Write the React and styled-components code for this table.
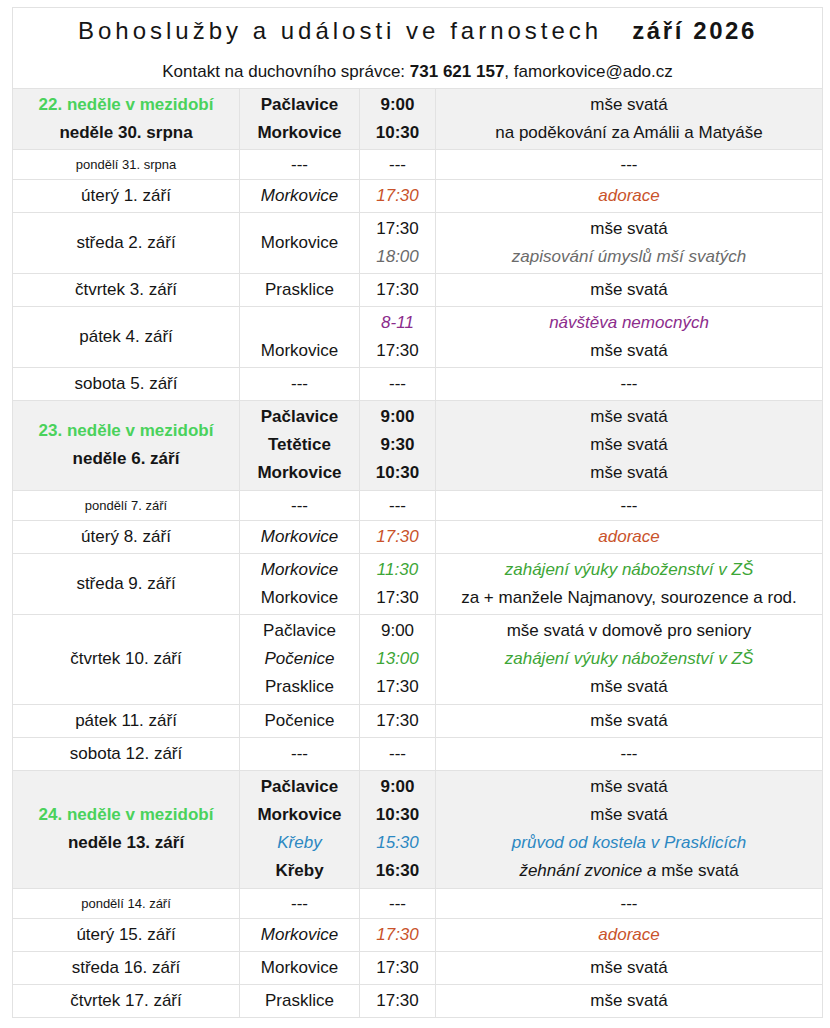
import React from "react";
import styled, { createGlobalStyle } from "styled-components";

const GlobalStyle = createGlobalStyle`
  body {
    margin: 0;
    background: #fff;
    font-family: "Liberation Sans", Arial, sans-serif;
    color: #151515;
  }
`;

const tones = {
  plain: "",
  bold: "font-weight: 700;",
  italic: "font-style: italic;",
  orange: "font-style: italic; color: #c9532b;",
  gray: "font-style: italic; color: #6b6b6b;",
  purple: "font-style: italic; color: #8c2c8c;",
  green: "font-style: italic; color: #3da637;",
  blue: "font-style: italic; color: #2c88c2;",
};

const Page = styled.div`
  padding: 7px 0 12px 12px;
`;

const Table = styled.div`
  width: 811px;
  box-sizing: border-box;
  border: 1px solid #e2e2e2;
`;

const Header = styled.div`
  padding: 10px 0 6px;
  text-align: center;
`;

const Title = styled.div`
  font-size: 24px;
  line-height: 26px;
  letter-spacing: 4px;
  margin-bottom: 18px;
  white-space: nowrap;
`;

const TitleStrong = styled.b`
  letter-spacing: 2.6px;
  margin-left: 30px;
`;

const Contact = styled.div`
  font-size: 17px;
  line-height: 20px;
  white-space: nowrap;
`;

const Group = styled.div`
  display: flex;
  border-top: 1px solid #e2e2e2;
  background: ${(p) => (p.$sunday ? "#f1f1f1" : "#fff")};
  font-size: 17px;
`;

const Col = styled.div`
  width: ${(p) => p.$w}px;
  box-sizing: border-box;
  flex-shrink: 0;
  padding: 2px 0 ${(p) => (p.$tall ? 3 : 2)}px;
  display: flex;
  flex-direction: column;
  justify-content: center;
  border-left: ${(p) => (p.$first ? "none" : "1px solid #e2e2e2")};
`;

const Line = styled.div`
  height: ${(p) => p.$span * p.$h}px;
  display: flex;
  align-items: center;
  justify-content: center;
  white-space: nowrap;
  font-size: ${(p) => (p.$small ? "13px" : "inherit")};
  ${(p) => tones[p.$tone]}
`;

const SundayName = styled(Line)`
  color: #4ad25c;
  font-weight: 700;
`;

const Em = styled.i``;

const L = (t, tone = "plain", span = 1) => ({ t, tone, span });
const dash = { places: [L("---")], times: [L("---")], texts: [L("---")] };
const mass = "mše svatá";
const teach = "zahájení výuky náboženství v ZŠ";

const rows = [
  {
    sunday: "22. neděle v mezidobí",
    day: "neděle 30. srpna",
    places: [L("Pačlavice", "bold"), L("Morkovice", "bold")],
    times: [L("9:00", "bold"), L("10:30", "bold")],
    texts: [L(mass), L("na poděkování za Amálii a Matyáše")],
  },
  { day: "pondělí 31. srpna", small: true, ...dash },
  {
    day: "úterý 1. září",
    places: [L("Morkovice", "italic")],
    times: [L("17:30", "orange")],
    texts: [L("adorace", "orange")],
  },
  {
    day: "středa 2. září",
    places: [L("Morkovice", "plain", 2)],
    times: [L("17:30"), L("18:00", "gray")],
    texts: [L(mass), L("zapisování úmyslů mší svatých", "gray")],
  },
  {
    day: "čtvrtek 3. září",
    places: [L("Prasklice")],
    times: [L("17:30")],
    texts: [L(mass)],
  },
  {
    day: "pátek 4. září",
    places: [L(""), L("Morkovice")],
    times: [L("8-11", "purple"), L("17:30")],
    texts: [L("návštěva nemocných", "purple"), L(mass)],
  },
  { day: "sobota 5. září", ...dash },
  {
    sunday: "23. neděle v mezidobí",
    day: "neděle 6. září",
    places: [L("Pačlavice", "bold"), L("Tetětice", "bold"), L("Morkovice", "bold")],
    times: [L("9:00", "bold"), L("9:30", "bold"), L("10:30", "bold")],
    texts: [L(mass), L(mass), L(mass)],
  },
  { day: "pondělí 7. září", small: true, ...dash },
  {
    day: "úterý 8. září",
    places: [L("Morkovice", "italic")],
    times: [L("17:30", "orange")],
    texts: [L("adorace", "orange")],
  },
  {
    day: "středa 9. září",
    places: [L("Morkovice", "italic"), L("Morkovice")],
    times: [L("11:30", "green"), L("17:30")],
    texts: [L(teach, "green"), L("za + manžele Najmanovy, sourozence a rod.")],
  },
  {
    day: "čtvrtek 10. září",
    places: [L("Pačlavice"), L("Počenice", "italic"), L("Prasklice")],
    times: [L("9:00"), L("13:00", "green"), L("17:30")],
    texts: [L("mše svatá v domově pro seniory"), L(teach, "green"), L(mass)],
  },
  {
    day: "pátek 11. září",
    places: [L("Počenice")],
    times: [L("17:30")],
    texts: [L(mass)],
  },
  { day: "sobota 12. září", ...dash },
  {
    sunday: "24. neděle v mezidobí",
    day: "neděle 13. září",
    places: [
      L("Pačlavice", "bold"),
      L("Morkovice", "bold"),
      L("Křeby", "blue"),
      L("Křeby", "bold"),
    ],
    times: [L("9:00", "bold"), L("10:30", "bold"), L("15:30", "blue"), L("16:30", "bold")],
    texts: [
      L(mass),
      L(mass),
      L("průvod od kostela v Prasklicích", "blue"),
      L(
        <>
          <Em>žehnání zvonice a</Em>&nbsp;mše svatá
        </>
      ),
    ],
  },
  { day: "pondělí 14. září", small: true, ...dash },
  {
    day: "úterý 15. září",
    places: [L("Morkovice", "italic")],
    times: [L("17:30", "orange")],
    texts: [L("adorace", "orange")],
  },
  {
    day: "středa 16. září",
    places: [L("Morkovice")],
    times: [L("17:30")],
    texts: [L(mass)],
  },
  {
    day: "čtvrtek 17. září",
    places: [L("Prasklice")],
    times: [L("17:30")],
    texts: [L(mass)],
  },
];

const Cells = ({ items, h }) =>
  items.map((it, i) => (
    <Line key={i} $span={it.span} $h={h} $tone={it.tone}>
      {it.t}
    </Line>
  ));

const Row = ({ row }) => {
  const h = row.small ? 25 : 28;
  const tall = row.times.length > 2;
  return (
    <Group $sunday={!!row.sunday}>
      <Col $w={226} $first $tall={tall}>
        {row.sunday && (
          <SundayName $span={1} $h={28} $tone="plain">
            {row.sunday}
          </SundayName>
        )}
        <Line $span={1} $h={h} $small={row.small} $tone={row.sunday ? "bold" : "plain"}>
          {row.day}
        </Line>
      </Col>
      <Col $w={120} $tall={tall}>
        <Cells items={row.places} h={h} />
      </Col>
      <Col $w={76} $tall={tall}>
        <Cells items={row.times} h={h} />
      </Col>
      <Col $w={387} $tall={tall}>
        <Cells items={row.texts} h={h} />
      </Col>
    </Group>
  );
};

const App = () => {
  return (
    <>
      <GlobalStyle />
      <Page>
        <Table>
          <Header>
            <Title>
              Bohoslužby a události ve farnostech
              <TitleStrong>září 2026</TitleStrong>
            </Title>
            <Contact>
              Kontakt na duchovního správce: <b>731 621 157</b>, famorkovice@ado.cz
            </Contact>
          </Header>
          {rows.map((row, i) => (
            <Row key={i} row={row} />
          ))}
        </Table>
      </Page>
    </>
  );
};

export default App;
